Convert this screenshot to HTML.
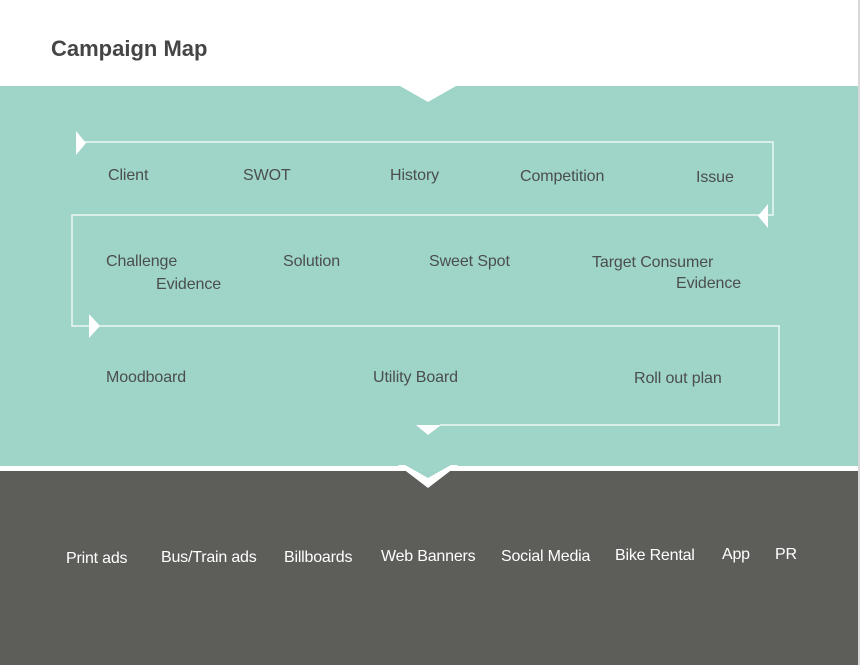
<!DOCTYPE html>
<html><head><meta charset="utf-8"><style>
*{margin:0;padding:0}
body{width:860px;height:665px;position:relative;overflow:hidden;background:#fff;font-family:"Liberation Sans",Helvetica,Arial,sans-serif}
.t{position:absolute;font-size:16px;color:#4a4e4c;white-space:nowrap;letter-spacing:-0.1px;line-height:18px}
.w{position:absolute;font-size:16px;color:#fff;white-space:nowrap;letter-spacing:-0.2px;line-height:18px}
</style></head><body>
<div style="position:absolute;left:0;top:86px;width:858px;height:380px;background:#9fd4c8"></div>
<div style="position:absolute;left:0;top:471px;width:858px;height:194px;background:#5d5e59"></div>
<div style="position:absolute;left:858px;top:0;width:2px;height:665px;background:#d8d8d8"></div>
<svg width="860" height="665" style="position:absolute;left:0;top:0">
<polygon points="400,86 456,86 428,102" fill="#fff"/>
<polygon points="398,465 458,465 428,488" fill="#fff"/>
<polygon points="405,465 451,465 428,478" fill="#9fd4c8"/>
<g fill="none" stroke="#eef7f4" stroke-width="1.5">
<polyline points="80,142 773,142 773,215 72,215 72,326 779,326 779,425 440,425"/>
</g>
<g fill="#fff">
<polygon points="76,131 86,143 76,155"/>
<polygon points="768,204 758,216 768,228"/>
<polygon points="89,314 100,326 89,338"/>
<polygon points="416,425 441,425 428,435"/>
</g>
</svg>
<div style="position:absolute;left:51px;top:36px;font-size:22px;font-weight:bold;color:#454545;line-height:26px">Campaign Map</div>
<div class="t" style="left:108px;top:167px">Client</div>
<div class="t" style="left:243px;top:167px">SWOT</div>
<div class="t" style="left:390px;top:167px">History</div>
<div class="t" style="left:520px;top:168px">Competition</div>
<div class="t" style="left:696px;top:169px">Issue</div>
<div class="t" style="left:106px;top:253px">Challenge</div>
<div class="t" style="left:156px;top:276px">Evidence</div>
<div class="t" style="left:283px;top:253px">Solution</div>
<div class="t" style="left:429px;top:253px">Sweet Spot</div>
<div class="t" style="left:592px;top:254px">Target Consumer</div>
<div class="t" style="left:676px;top:275px">Evidence</div>
<div class="t" style="left:106px;top:369px">Moodboard</div>
<div class="t" style="left:373px;top:369px">Utility Board</div>
<div class="t" style="left:634px;top:370px">Roll out plan</div>
<div class="w" style="left:66px;top:550px">Print ads</div>
<div class="w" style="left:161px;top:549px">Bus/Train ads</div>
<div class="w" style="left:284px;top:549px">Billboards</div>
<div class="w" style="left:381px;top:548px">Web Banners</div>
<div class="w" style="left:501px;top:548px">Social Media</div>
<div class="w" style="left:615px;top:547px">Bike Rental</div>
<div class="w" style="left:722px;top:546px">App</div>
<div class="w" style="left:775px;top:546px">PR</div>
</body></html>
